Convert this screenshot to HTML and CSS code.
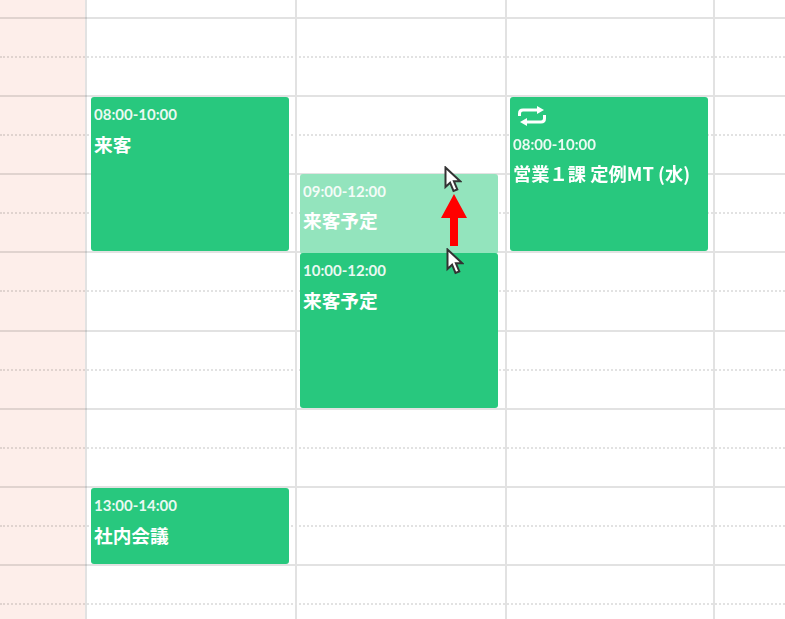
FILE: index.html
```html
<!DOCTYPE html>
<html lang="ja">
<head>
    <meta charset="UTF-8">
    <title>カレンダー</title>
    <link rel="stylesheet" href="styles.css">
</head>
<body>
<div id="calendar">
    <div class="rows">
        <div class="slot first"></div>
        <div class="slot half"></div><div class="slot"></div>
        <div class="slot half"></div><div class="slot"></div>
        <div class="slot half"></div><div class="slot"></div>
        <div class="slot half"></div><div class="slot"></div>
        <div class="slot half"></div><div class="slot"></div>
        <div class="slot half"></div><div class="slot"></div>
        <div class="slot half"></div><div class="slot"></div>
        <div class="slot half"></div><div class="slot"></div>
    </div>
    <div class="days">
        <div class="day holiday"></div>
        <div class="day day-a">
            <div class="event ev-8-10">
                <div class="time">08:00-10:00</div>
                <div class="title">来客</div>
            </div>
            <div class="event ev-13-14">
                <div class="time">13:00-14:00</div>
                <div class="title">社内会議</div>
            </div>
        </div>
        <div class="day day-b">
            <div class="event ev-9-12 ghost">
                <div class="time">09:00-12:00</div>
                <div class="title tight">来客予定</div>
            </div>
            <div class="event ev-10-12">
                <div class="time">10:00-12:00</div>
                <div class="title">来客予定</div>
            </div>
        </div>
        <div class="day day-c">
            <div class="event ev-8-10">
                <svg class="repeat" viewBox="0 0 30 20" width="30" height="20">
                    <path d="M2.500 10V7.500C2.500 5.300 4 4 6 4H22" />
                    <path d="M27.500 9v3.500c0 2.200-1.500 3.500-3.500 3.500H8" />
                    <path class="head" d="M20 0l7 4-7 4z" />
                    <path class="head" d="M10 12l-7 4 7 4z" />
                </svg>
                <div class="time">08:00-10:00</div>
                <div class="title tight narrow">営業１課 定例MT (水)</div>
            </div>
        </div>
        <div class="day last"></div>
    </div>

    <svg class="cursor cursor-top" viewBox="0 0 18 28" width="18" height="28">
        <path d="M1.500 1.500V21l4.600-4.300 3.400 8.300 3.800-1.600-3.400-8.100h6.300z" />
    </svg>
    <svg class="arrow" viewBox="0 0 28 52" width="28" height="52">
        <path d="M14 0L27 24H18V52H10V24H1z" />
    </svg>
    <svg class="cursor cursor-bottom" viewBox="0 0 18 28" width="18" height="28">
        <path d="M1.500 1.500V21l4.600-4.300 3.400 8.300 3.800-1.600-3.400-8.100h6.300z" />
    </svg>
</div>
</body>
</html>
```

FILE: styles.css
```css
html, body {
    margin: 0;
    padding: 0;
    height: 100%;
    overflow: hidden;
    background: #fff;
}

#calendar {
    position: relative;
    width: 785px;
    height: 619px;
    overflow: hidden;
    background: #fff;
    font-family: "Noto Sans CJK JP", "Noto Sans", sans-serif;
    filter: blur(0.45px);
}

.slot {
    box-sizing: border-box;
    height: 39.07px;
    border-bottom: 2px solid #e2e2e2;
}
.slot.first {
    height: 19px;
}
.slot.half {
    border-bottom: 2px dotted #e2e2e2;
}

.days {
    position: absolute;
    top: 0;
    left: 0;
    right: 0;
    bottom: 0;
    display: flex;
}
.day {
    position: relative;
    box-sizing: border-box;
    flex: none;
    border-right: 2px solid #e2e2e2;
}
.day.holiday {
    width: 87px;
    background: #fdeeea;
    mix-blend-mode: multiply;
}
.day-a { width: 210px; }
.day-b { width: 209.500px; }
.day-c { width: 208.500px; }
.day.last {
    flex: 1;
    border-right: 0;
}

.event {
    position: absolute;
    left: 4px;
    width: 198px;
    box-sizing: border-box;
    padding: 5px 3px;
    border-radius: 3px;
    background: #28c87e;
    color: #fff;
    font-weight: 700;
}
.day-b .event { left: 3px; }
.day-c .event { left: 3.500px; }
.ev-8-10 { top: 97px; height: 154px; }
.ev-13-14 { top: 488px; height: 76px; }
.ev-10-12 { top: 253px; height: 155px; }
.ev-9-12 { top: 174px; height: 80px; }
.event.ghost {
    background: #93e4bd;
}

.time {
    font-family: Lato, "Noto Sans", sans-serif;
    font-size: 15px;
    line-height: 24px;
    opacity: 0.9;
}
.title {
    margin-top: 6px;
    font-size: 18.700px;
    line-height: 24px;
    white-space: nowrap;
}
.title.tight {
    margin-top: 5px;
}
.title.narrow {
    font-size: 18.300px;
}

.repeat {
    display: block;
    margin: 4px 0 6px 4px;
}
.repeat path {
    fill: none;
    stroke: #fff;
    stroke-width: 3;
}
.repeat .head {
    fill: #fff;
    stroke: none;
}

.cursor {
    position: absolute;
}
.cursor path {
    fill: #fff;
    stroke: #333;
    stroke-width: 2;
}
.cursor-top { left: 444px; top: 166px; }
.cursor-bottom { left: 446px; top: 248px; }

.arrow {
    position: absolute;
    left: 440px;
    top: 194px;
    fill: #ff0000;
}
```
